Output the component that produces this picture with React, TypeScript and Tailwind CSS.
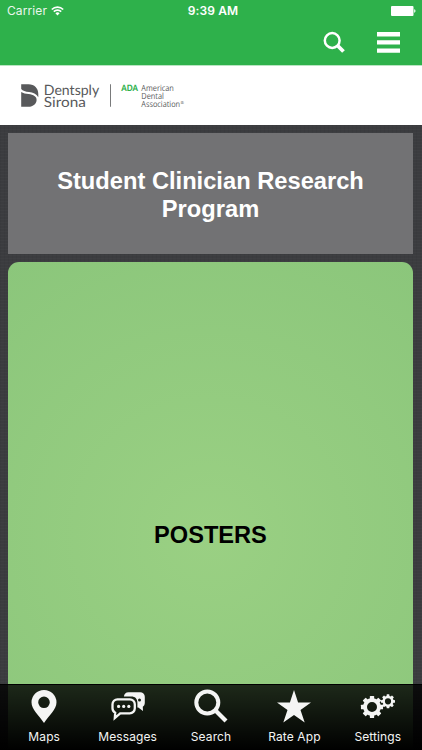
import type { ReactNode } from "react";

const GEAR_TEETH = [0, 45, 90, 135, 180, 225, 270, 315];

function Gear({ cx, cy, r, hole, tooth }: { cx: number; cy: number; r: number; hole: number; tooth: number }) {
  return (
    <g transform={`translate(${cx} ${cy})`}>
      <circle r={(r + hole) / 2} fill="none" stroke="currentColor" strokeWidth={r - hole} />
      {GEAR_TEETH.map((a) => (
        <rect key={a} x={-tooth / 2} y={-r - tooth * 0.5} width={tooth} height={tooth} rx="0.5" transform={`rotate(${a})`} fill="currentColor" />
      ))}
    </g>
  );
}

function StatusBar() {
  return (
    <div className="grid h-[21px] grid-cols-3 items-center pl-[7px] pr-[6px] text-[12px] leading-none">
      <div className="flex items-center gap-[4px]">
        <span className="tracking-[0.1px] opacity-90">Carrier</span>
        <svg width="13" height="10" viewBox="0 0 13 10" fill="none" stroke="#fff" strokeWidth="1.7">
          <path d="M.8 3.5a8.1 8.1 0 0 1 11.400 0M2.800 5.700a5.300 5.300 0 0 1 7.400 0" />
          <path d="M6.500 9.400 4.400 7.300a3 3 0 0 1 4.200 0z" fill="#fff" stroke="none" />
        </svg>
      </div>
      <span className="pl-[3px] text-center font-semibold tracking-[0.1px] whitespace-nowrap">9:39 AM</span>
      <svg className="justify-self-end" width="25" height="10" viewBox="0 0 25 10" fill="#fff">
        <rect width="22.5" height="10" rx="1" />
        <path d="M23.200 3.300c1.700.3 1.700 3.100 0 3.400z" />
      </svg>
    </div>
  );
}

function Header() {
  return (
    <header className="h-[65px] shrink-0 bg-[#2eb14b] text-white">
      <StatusBar />
      <div className="flex h-[43px] items-center justify-end gap-[31px] pr-[22px]">
        <svg width="23" height="23" viewBox="0 0 23 23" fill="none" stroke="currentColor">
          <circle cx="9.200" cy="9.500" r="7.400" strokeWidth="2.500" />
          <path d="m14.500 14.500 6 6" strokeWidth="3.800" />
        </svg>
        <svg width="23" height="21" viewBox="0 0 23 21" fill="currentColor">
          <path d="M0 .1h23v4.300H0zM0 8.300h23v4.300H0zM0 16.500h23v4.300H0z" />
        </svg>
      </div>
    </header>
  );
}

function Sponsors() {
  return (
    <div className="flex h-[60px] shrink-0 items-center border-t border-[#b9e5c2] bg-white pl-[20px]">
      <svg width="166" height="28" viewBox="20 82 166 28" fontFamily="Lato, sans-serif" fill="#58595b" textRendering="geometricPrecision">
        <path d="M21.200 84.200h7.300c6 0 9.800 4.200 9.800 9.700v3.300c-2-3.400-5.200-4.500-9.300-5.100-3.600-.5-6.300-1.200-7.800-3.100z" />
        <path d="M21.200 91.900c2 1.400 4.600 1.700 7.400 2.200 4.900.8 8 2.400 8 5.800 0 3.700-3.400 6.800-8.200 6.800h-7.200z" />
        <g fontSize="14.2">
          <text x="43.800" y="94.500" textLength="55.4" lengthAdjust="spacingAndGlyphs">Dentsply</text>
          <text x="43.800" y="106.700" textLength="42" lengthAdjust="spacingAndGlyphs">Sirona</text>
        </g>
        <path d="M110.200 84.300h.8v22.400h-.8z" />
        <text x="121.300" y="90.800" fontSize="8.8" fontWeight="900" fill="#2eb14b" textLength="16.6" lengthAdjust="spacingAndGlyphs">ADA</text>
        <g fontFamily="'Open Sans', sans-serif" fontSize="8.5">
          <text x="141.300" y="90.800" textLength="32.6" lengthAdjust="spacingAndGlyphs">American</text>
          <text x="141.300" y="98.700" textLength="22.6" lengthAdjust="spacingAndGlyphs">Dental</text>
          <text x="141.300" y="106.500" textLength="38.8" lengthAdjust="spacingAndGlyphs">Association</text>
          <text x="180.400" y="104.300" fontSize="4">®</text>
        </g>
      </svg>
    </div>
  );
}

function Tab({ label, children }: { label: string; children: ReactNode }) {
  return (
    <div className="flex flex-1 flex-col items-center">
      <svg width="36" height="36" viewBox="0 0 36 36" fill="currentColor" className="mt-[4px]">
        {children}
      </svg>
      <span className="mt-[4px] text-[12px] leading-[15px] tracking-[0.1px] whitespace-nowrap">{label}</span>
    </div>
  );
}

function TabBar() {
  return (
    <nav className="absolute inset-x-0 bottom-0 flex h-[66px] border-t border-black bg-linear-to-b from-black/80 to-black px-[2.5px] text-[#f4f5f4]">
      <Tab label="Maps">
        <path fillRule="evenodd" d="M18 .9A12.400 12.400 0 0 0 5.500 13.200C5.500 20.500 13 26 18 34 23 26 30.500 20.500 30.500 13.200A12.400 12.400 0 0 0 18 .9zm0 6.600a5.800 5.800 0 1 1 0 11.600 5.800 5.800 0 0 1 0-11.600z" />
      </Tab>
      <Tab label="Messages">
        <path fillRule="evenodd" d="M18.500 3.200h11.700a4.600 4.600 0 0 1 4.600 4.600v6c0 2-.8 3.300-2 4l.2 4.200-4.700-3.500h-.9V14c0-4.500-2.500-6.500-6-6.500h-7.500c.3-2.600 1.800-4.300 4.600-4.300zM29.500 9.500a1.500 1.500 0 1 0 0 3 1.500 1.500 0 0 0 0-3z" />
        <path d="M7.500 10.300h12.300a5 5 0 0 1 5 5v4a5 5 0 0 1-5 5h-9.600L4.800 29l.4-5.300a5 5 0 0 1-2.700-4.400v-4a5 5 0 0 1 5-5z" fill="none" stroke="currentColor" strokeWidth="2.3" />
        <circle cx="8.600" cy="17.400" r="1.6" />
        <circle cx="13.700" cy="17.400" r="1.6" />
        <circle cx="18.800" cy="17.400" r="1.6" />
      </Tab>
      <Tab label="Search">
        <circle cx="14.300" cy="13.500" r="11" fill="none" stroke="currentColor" strokeWidth="4" />
        <path d="m22.500 21.500 10.500 10.500" fill="none" stroke="currentColor" strokeWidth="4.2" />
      </Tab>
      <Tab label="Rate App">
        <path d="m18 .9 4.100 12.500h12.900l-10.500 7.700 4.200 12.400L18 25.900 7.300 33.500l4.200-12.400L1 13.400h12.900z" />
      </Tab>
      <Tab label="Settings">
        <Gear cx={12} cy={18} r={8.9} hole={5} tooth={4.3} />
        <Gear cx={28} cy={12.3} r={5.6} hole={3.1} tooth={2.8} />
      </Tab>
    </nav>
  );
}

export default function App() {
  return (
    <div className="relative flex h-[750px] w-[422px] flex-col overflow-hidden bg-[#3b3c3f] font-[Inter,sans-serif] text-white">
      <Header />
      <Sponsors />
      <main className="flex flex-col gap-2 bg-[repeating-linear-gradient(0deg,#ffffff04_0_1px,transparent_1px_3px),repeating-linear-gradient(90deg,#0000000a_0_1px,transparent_1px_4px)] pl-2 pr-[9px] pt-2 font-['Liberation_Sans',sans-serif] font-bold">
        <h1 className="flex h-[121px] shrink-0 items-center justify-center bg-[#727274] px-8 pt-[2px] text-center text-[23.7px] leading-[28px]">
          Student Clinician Research Program
        </h1>
        <div className="flex h-[546px] shrink-0 items-center justify-center rounded-[11px] bg-[radial-gradient(circle_at_50%_50%,#9ad083,#8bc67b_340px)] pt-[2px] text-[23.6px] text-black">
          POSTERS
        </div>
      </main>
      <TabBar />
    </div>
  );
}
